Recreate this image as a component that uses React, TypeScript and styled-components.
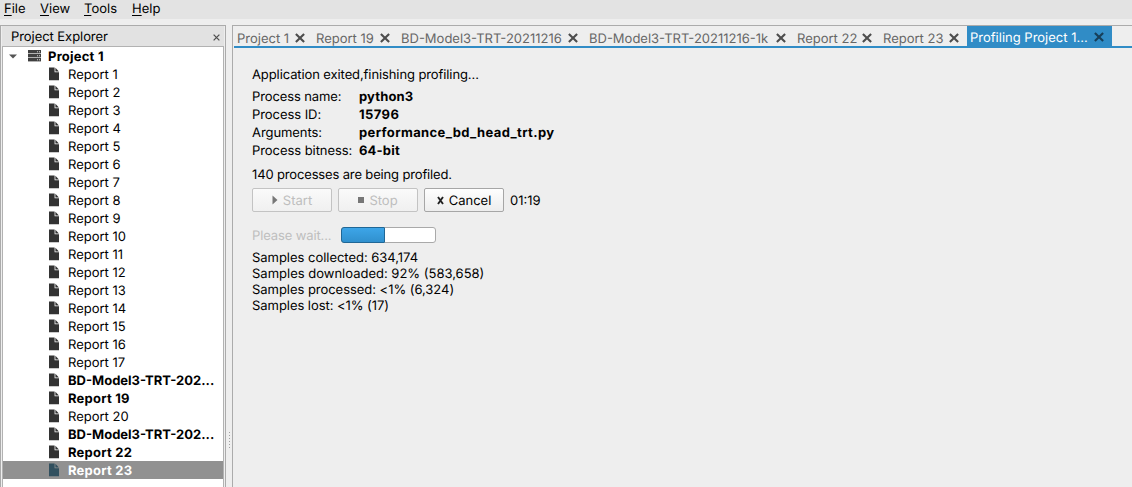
import React from "react";
import styled, { createGlobalStyle, css } from "styled-components";

const Global = createGlobalStyle`
  * { box-sizing: border-box; }
  body { margin: 0; background: #eeeeee; overflow: hidden; }
`;

const Window = styled.div`
  display: flex;
  flex-direction: column;
  height: 487px;
  width: 1132px;
  overflow: hidden;
  background: #eeeeee;
  color: #000;
  font-family: Inter, "Liberation Sans", sans-serif;
  font-size: 13px;
  line-height: 18px;
  white-space: nowrap;
  text-rendering: geometricPrecision;
`;

const MenuBar = styled.nav`
  display: flex;
  flex: none;
  height: 19px;
  background: #e3e3e3;
  padding-left: 4px;
`;

const MenuItem = styled.span<{ $w: number }>`
  width: ${(p) => p.$w}px;
  line-height: 19px;
  &::first-letter {
    text-decoration: underline;
    text-decoration-thickness: 1px;
    text-underline-offset: 2px;
  }
`;

const Workspace = styled.div`
  display: flex;
  flex: 1;
  min-height: 0;
  padding-top: 6px;
`;

const Explorer = styled.aside`
  display: flex;
  flex-direction: column;
  width: 226px;
  border: 1px solid #ababab;
  border-bottom: 0;
  background: #eeeeee;
`;

const ExplorerHeader = styled.div`
  display: flex;
  align-items: center;
  justify-content: space-between;
  height: 20px;
  margin: 0 1px;
  padding: 2px 4px 0 9px;
  letter-spacing: -0.06px;
  background: #e2e2e2;
`;

const Tree = styled.div`
  flex: 1;
  margin: 0 1px;
  border: 1px solid #b2b2b2;
  border-bottom: 0;
  background: #fff;
`;

const TreeRow = styled.div<{ $root?: boolean; $bold?: boolean; $selected?: boolean }>`
  display: flex;
  align-items: center;
  height: 18px;
  padding-left: ${(p) => (p.$root ? 6 : 45)}px;
  font-weight: ${(p) => (p.$bold ? 700 : 400)};
  color: ${(p) => (p.$selected ? "#fff" : "#000")};
  background: ${(p) => (p.$selected ? "#919191" : "transparent")};
`;

const RowLabel = styled.span<{ $gap: number; $spacing?: number }>`
  margin-left: ${(p) => p.$gap}px;
  padding-top: 2px;
  letter-spacing: ${(p) => p.$spacing ?? 0}px;
`;

const RootIcon = styled.span`
  display: flex;
  margin-left: 11px;
`;

const Splitter = styled.div`
  display: flex;
  flex-direction: column;
  justify-content: flex-start;
  align-items: center;
  width: 6px;
  padding-top: 407px;
  gap: 2px;
`;

const GripDot = styled.i`
  width: 1px;
  height: 1px;
  flex: none;
  background: #a0a0a0;
`;

const Main = styled.main`
  flex: 1;
  min-width: 0;
  border: solid #ababab;
  border-width: 1px 0 0 1px;
`;

const TabBar = styled.div`
  display: flex;
  height: 22px;
  margin-left: 1px;
  border-bottom: 2px solid #308cc6;
`;

const Tab = styled.div<{ $w: number; $active?: boolean }>`
  display: flex;
  flex: none;
  align-items: center;
  justify-content: space-between;
  width: ${(p) => p.$w}px;
  padding: 4px 8px 0 3px;
  color: #666;
  ${(p) =>
    p.$active &&
    css`
      color: #fff;
      background: #308cc6;
      padding: 2px 8px 0 3px;
    `}
`;

const TabLabel = styled.span`
  padding-top: 2px;
`;

const Content = styled.section`
  padding: 18px 0 0 19px;
`;

const Line = styled.div<{ $h?: number; $spacing?: number }>`
  height: ${(p) => p.$h ?? 18}px;
  line-height: ${(p) => p.$h ?? 18}px;
  letter-spacing: ${(p) => p.$spacing ?? 0}px;
`;

const Details = styled.dl`
  display: grid;
  grid-template-columns: 107px auto;
  margin: 4px 0 6px;
`;

const Term = styled.dt<{ $spacing: number }>`
  letter-spacing: ${(p) => p.$spacing}px;
`;

const Value = styled.dd<{ $spacing: number }>`
  margin: 0;
  font-weight: 700;
  letter-spacing: ${(p) => p.$spacing}px;
`;

const Controls = styled.div`
  display: flex;
  align-items: center;
  gap: 6px;
  margin-top: 4px;
`;

const ControlLabel = styled.span`
  padding-top: 2px;
`;

const Button = styled.button`
  display: flex;
  align-items: center;
  justify-content: center;
  gap: 5px;
  width: 80px;
  height: 24px;
  padding: 0;
  border: 1px solid #a6a6a6;
  border-radius: 2px;
  background: linear-gradient(#fefefe, #ededed);
  color: #000;
  font: inherit;
  text-rendering: inherit;
  &:disabled {
    border-color: #c3c3c3;
    background: linear-gradient(#fafafa, #f0f0f0);
    color: #bebebe;
  }
`;

const WaitRow = styled.div`
  display: flex;
  align-items: center;
  height: 18px;
  margin: 14px 0 6px;
  color: #bebebe;
`;

const WaitLabel = styled.span`
  width: 89px;
  padding-top: 2px;
  letter-spacing: -0.12px;
`;

const Track = styled.div`
  width: 95px;
  height: 16px;
  border: 1px solid #a9a9a9;
  border-radius: 3px;
  background: #fff;
`;

const Fill = styled.div`
  width: 44px;
  height: 16px;
  margin: -1px;
  border: 1px solid #206796;
  border-radius: 3px 1px 1px 3px;
  background: linear-gradient(#3da5e8, #3090ce);
`;

const Cross = ({ size = 10, color = "#4d4d4d", stroke = 1.9 }: { size?: number; color?: string; stroke?: number }) => (
  <svg width={size} height={size} viewBox="0 0 9 9">
    <path d="M0.8 0.8 8.2 8.2M8.2 0.8 0.8 8.2" stroke={color} strokeWidth={stroke} fill="none" />
  </svg>
);

const CancelIcon = () => (
  <svg width="7" height="9" viewBox="0 0 7 9">
    <path d="M1 1 6 8M6 1 1 8" stroke="#222" strokeWidth="1.9" fill="none" />
  </svg>
);

const FileIcon = ({ selected }: { selected?: boolean }) => {
  const fill = selected ? "#31505f" : "#333";
  return (
    <svg width="16" height="18" viewBox="0 0 16 18">
      <path d="M1 2.6H6.6V7.3H11V15.2H1Z" fill={fill} />
      <path d="M7.4 2.8 10.9 6.5H7.4Z" fill={fill} />
    </svg>
  );
};

const ServerIcon = () => (
  <svg width="13" height="12" viewBox="0 0 13 12">
    {[0, 4, 8].map((y) => (
      <g key={y}>
        <rect x="0" y={y} width="13" height="3.4" fill="#3f3f3f" />
        <rect x="9" y={y + 1} width="1" height="1.4" fill="#aaa" />
        <rect x="11" y={y + 1} width="1" height="1.4" fill="#aaa" />
      </g>
    ))}
  </svg>
);

const menus: [string, number][] = [["File", 36], ["View", 44], ["Tools", 48], ["Help", 40]];

const reports = Array.from({ length: 23 }, (_, i) => {
  const n = i + 1;
  const model = n === 18 || n === 21;
  const bold = model || n === 19 || n >= 22;
  return {
    name: model ? "BD-Model3-TRT-202..." : `Report ${n}`,
    bold,
    selected: n === 23,
    spacing: bold && !model ? 0.22 : 0,
  };
});

const tabs: [string, number][] = [
  ["Project 1", 79],
  ["Report 19", 85],
  ["BD-Model3-TRT-20211216", 188],
  ["BD-Model3-TRT-20211216-1k", 208],
  ["Report 22", 86],
  ["Report 23", 87],
];

const details: [string, string, number, number][] = [
  ["Process name:", "python3", -0.11, 0.15],
  ["Process ID:", "15796", -0.06, 0.4],
  ["Arguments:", "performance_bd_head_trt.py", -0.08, 0.37],
  ["Process bitness:", "64-bit", -0.06, 0.18],
];

const samples: [string, number][] = [
  ["Samples collected: 634,174", -0.03],
  ["Samples downloaded: 92% (583,658)", 0],
  ["Samples processed: <1% (6,324)", -0.04],
  ["Samples lost: <1% (17)", -0.05],
];

export default function App() {
  return (
    <Window>
      <Global />
      <MenuBar>
        {menus.map(([m, w]) => <MenuItem key={m} $w={w}>{m}</MenuItem>)}
      </MenuBar>
      <Workspace>
        <Explorer>
          <ExplorerHeader>
            <span>Project Explorer</span>
            <Cross size={7} stroke={1.6} />
          </ExplorerHeader>
          <Tree>
            <TreeRow $root $bold>
              <svg width="8" height="5" viewBox="0 0 8 5"><path d="M0 0.5H8L4 4.5Z" fill="#555" /></svg>
              <RootIcon><ServerIcon /></RootIcon>
              <RowLabel $gap={7} $spacing={0.22}>Project 1</RowLabel>
            </TreeRow>
            {reports.map((r, i) => (
              <TreeRow key={i} $bold={r.bold} $selected={r.selected}>
                <FileIcon selected={r.selected} />
                <RowLabel $gap={4} $spacing={r.spacing}>{r.name}</RowLabel>
              </TreeRow>
            ))}
          </Tree>
        </Explorer>
        <Splitter>
          {Array.from({ length: 6 }, (_, i) => <GripDot key={i} />)}
        </Splitter>
        <Main>
          <TabBar>
            {tabs.map(([name, w]) => (
              <Tab key={name} $w={w}><TabLabel>{name}</TabLabel><Cross /></Tab>
            ))}
            <Tab $w={145} $active><TabLabel>Profiling Project 1...</TabLabel><Cross color="#173f59" /></Tab>
          </TabBar>
          <Content>
            <Line $spacing={-0.1}>Application exited,finishing profiling...</Line>
            <Details>
              {details.map(([k, v, ks, vs]) => (
                <React.Fragment key={k}>
                  <Term $spacing={ks}>{k}</Term>
                  <Value $spacing={vs}>{v}</Value>
                </React.Fragment>
              ))}
            </Details>
            <Line $spacing={-0.15}>140 processes are being profiled.</Line>
            <Controls>
              <Button disabled>
                <svg width="6" height="10" viewBox="0 0 6 10"><path d="M0.5 0.5 5.5 5 0.5 9.5Z" fill="#777" /></svg>
                <ControlLabel>Start</ControlLabel>
              </Button>
              <Button disabled>
                <svg width="6" height="6" viewBox="0 0 6 6"><rect width="6" height="6" fill="#777" /></svg>
                <ControlLabel>Stop</ControlLabel>
              </Button>
              <Button>
                <CancelIcon />
                <ControlLabel>Cancel</ControlLabel>
              </Button>
              <ControlLabel>01:19</ControlLabel>
            </Controls>
            <WaitRow>
              <WaitLabel>Please wait...</WaitLabel>
              <Track><Fill /></Track>
            </WaitRow>
            {samples.map(([s, sp]) => <Line key={s} $h={16} $spacing={sp}>{s}</Line>)}
          </Content>
        </Main>
      </Workspace>
    </Window>
  );
}
